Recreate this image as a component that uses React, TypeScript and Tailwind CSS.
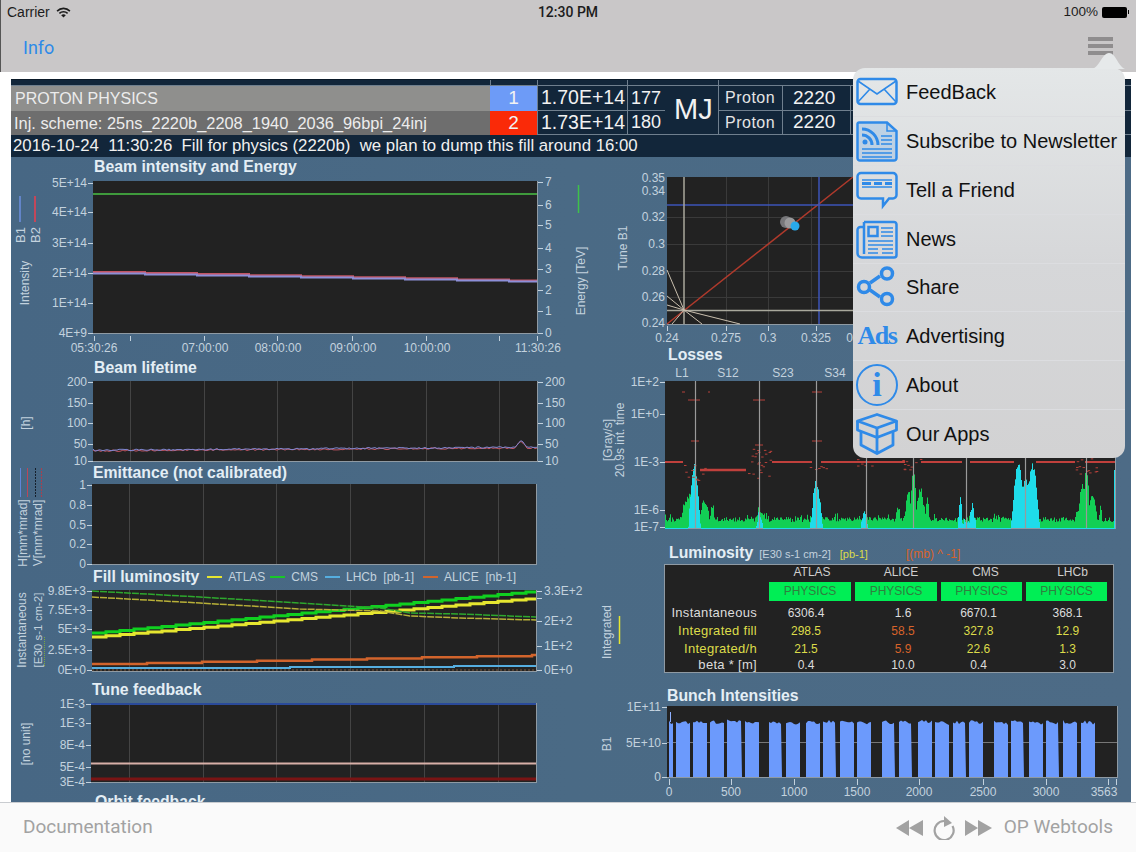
import type { ReactNode } from "react";

const rnd = (i: number) => {
  const v = Math.sin(i * 12.9898) * 43758.5453;
  return v - Math.floor(v);
};

type Tick = [string, number];

const TXT = "#c3d2de";
const PLOT = "#222222";
const AXIS = "#8f9aa3";

function Plot({ x0, x1, y0, y1, left = [], right = [], grid = [], dash = true }: { x0: number; x1: number; y0: number; y1: number; left?: Tick[]; right?: Tick[]; grid?: number[]; dash?: boolean }) {
  return (
    <g>
      <rect x={x0} y={y0} width={x1 - x0} height={y1 - y0} fill={PLOT} />
      <path d={`M${x0} ${y1 + 0.5}H${x1}M${x1 + 0.5} ${y0}V${y1 + 1}`} stroke={AXIS} strokeWidth="1" />
      {grid.map((x) => (
        <path key={x} d={`M${x + 0.5} ${y0}V${y1}`} stroke="#444" strokeWidth="1" />
      ))}
      {left.map(([t, y], i) => (
        <g key={i}>
          <text x={x0 - (dash ? 6 : 2)} y={y + 4} textAnchor="end" fontSize="12" fill={TXT}>{t}</text>
          {dash && <path d={`M${x0 - 5} ${y + 0.5}H${x0}`} stroke={TXT} />}
        </g>
      ))}
      {right.map(([t, y], i) => (
        <g key={i}>
          <path d={`M${x1 + 1} ${y + 0.5}H${x1 + 6}`} stroke={TXT} />
          <text x={x1 + 8} y={y + 4} fontSize="12" fill={TXT}>{t}</text>
        </g>
      ))}
    </g>
  );
}

function VLabel({ x, y, children, size = 12 }: { x: number; y: number; children: ReactNode; size?: number }) {
  return (
    <text x={x} y={y} fontSize={size} fill={TXT} textAnchor="middle" transform={`rotate(-90 ${x} ${y})`}>
      {children}
    </text>
  );
}

function Title({ children, className = "" }: { children: ReactNode; className?: string }) {
  return <div className={`h-5 text-[15.8px] leading-5 font-bold whitespace-nowrap text-[#e4eef5] ${className}`}>{children}</div>;
}

const timeGrid = [130, 204, 277, 352, 426, 499];

function stepLine(x0: number, x1: number, y0: number, y1: number, step: number) {
  let d = `M${x0} ${y0}`;
  for (let x = x0 + step; x <= x1; x += step) {
    const y = y0 + ((y1 - y0) * (x - x0)) / (x1 - x0);
    d += `H${x}V${y.toFixed(1)}`;
  }
  return `${d}H${x1}`;
}

function BeamIntensity() {
  return (
    <svg viewBox="11 177 590 181" className="block w-[590px] h-[181px] overflow-visible">
      <Plot x0={93} x1={537} y0={181} y1={333}
        left={[["5E+14", 183], ["4E+14", 212], ["3E+14", 243], ["2E+14", 273], ["1E+14", 303], ["4E+9", 333]]}
        right={[["7", 182], ["6", 205], ["5", 225], ["4", 248], ["3", 269], ["2", 290], ["1", 311], ["0", 333]]} />
      <path d="M93 194H537" stroke="#3f9a3c" strokeWidth="2" />
      <path d={stepLine(93, 537, 272, 281, 52)} stroke="#c25563" strokeWidth="2" fill="none" />
      <path d={stepLine(93, 537, 273.5, 282, 52)} stroke="#8d8fd8" strokeWidth="2" fill="none" />
      {[94, 130, 204, 277, 352, 426, 499, 537].map((x) => (
        <path key={x} d={`M${x + 0.5} 336V341`} stroke={TXT} />
      ))}
      {([["05:30:26", 94], ["07:00:00", 205], ["08:00:00", 278], ["09:00:00", 353], ["10:00:00", 427], ["11:30:26", 538]] as Tick[]).map(([t, x]) => (
        <text key={t} x={x} y={352} textAnchor="middle" fontSize="12" fill={TXT}>{t}</text>
      ))}
      <path d="M20 196V222" stroke="#6d8fe0" strokeWidth="1.5" />
      <path d="M35 196V222" stroke="#c2475a" strokeWidth="2" />
      <VLabel x={25} y={235} size={13}>B1</VLabel>
      <VLabel x={40} y={235} size={13}>B2</VLabel>
      <VLabel x={29} y={283}>Intensity</VLabel>
      <VLabel x={585} y={281}>Energy [TeV]</VLabel>
      <path d="M578.5 185V213" stroke="#3fc24a" strokeWidth="1.5" />
    </svg>
  );
}

function BeamLifetime() {
  let a = "M93 450";
  let b = "M93 449";
  for (let x = 95; x <= 537; x += 2) {
    const bump = Math.abs(x - 521) < 6 ? -7 * (1 - Math.abs(x - 521) / 6) : 0;
    const base = 450 - ((x - 93) / 444) * 3 + bump;
    a += `L${x} ${(base + rnd(x) * 1.6).toFixed(1)}`;
    b += `L${x} ${(base - 0.6 + rnd(x + 500) * 1.6).toFixed(1)}`;
  }
  return (
    <svg viewBox="11 378 590 85" className="block w-[590px] h-[85px] overflow-visible">
      <Plot x0={93} x1={537} y0={381} y1={461} grid={timeGrid}
        left={[["200", 382], ["150", 403], ["100", 423], ["50", 444], ["10", 461]]}
        right={[["200", 382], ["150", 403], ["100", 423], ["50", 444], ["10", 461]]} />
      <path d={a} stroke="#c25563" fill="none" />
      <path d={b} stroke="#7f86d0" fill="none" />
      <VLabel x={30} y={423}>[h]</VLabel>
    </svg>
  );
}

function Emittance() {
  return (
    <svg viewBox="11 483 590 84" className="block w-[590px] h-[84px] overflow-visible">
      <Plot x0={92} x1={536} y0={484} y1={564} grid={[129, 203, 276, 350, 424, 498]}
        left={[["1", 485], ["0.8", 505], ["0.5", 525], ["0.2", 544], ["0", 564]]} />
      <path d="M20.5 468V497" stroke="#5f86d8" />
      <path d="M27.5 468V497" stroke="#b8485a" />
      <path d="M35.5 468V497" stroke="#16202c" strokeDasharray="2 1" />
      <path d="M41.5 468V497" stroke="#a8404f" strokeDasharray="2 1" />
      <VLabel x={27} y={533}>H[mm*mrad]</VLabel>
      <VLabel x={42} y={533}>V[mm*mrad]</VLabel>
    </svg>
  );
}

function FillLuminosity() {
  return (
    <svg viewBox="11 587 590 93" className="block w-[590px] h-[93px] overflow-visible">
      <Plot x0={92} x1={536} y0={590} y1={671} grid={[129, 203, 276, 350, 424, 498]}
        left={[["9.8E+3", 591], ["7.5E+3", 610], ["5E+3", 629], ["2.5E+3", 650], ["0E+0", 670]]}
        right={[["3.3E+2", 591], ["", 598], ["2E+2", 621], ["1E+2", 646], ["0E+0", 670]]} />
      <path d={stepLine(92, 536, 633, 591, 14)} stroke="#10d020" strokeWidth="3" fill="none" />
      <path d={stepLine(92, 536, 637, 598, 14)} stroke="#e6e630" strokeWidth="3" fill="none" />
      <path d="M92 591L200 597L300 603L380 608L410 613L460 614L536 617" stroke="#2ea82e" strokeWidth="1.5" strokeDasharray="7 1" fill="none" />
      <path d="M92 597L200 603L300 609L380 611L410 616L460 618L536 620" stroke="#b8b038" strokeWidth="1.5" strokeDasharray="7 1" fill="none" />
      <path d={stepLine(92, 536, 664, 655, 55)} stroke="#d2642c" strokeWidth="2.5" fill="none" />
      <path d="M92 668H290V667H454V666H536" stroke="#55aee0" strokeWidth="2" fill="none" />
      <path d="M92 670H536" stroke="#7a5a40" strokeWidth="1" strokeDasharray="2 2" />
      <path d="M44.5 637V666" stroke="#7aa840" strokeDasharray="1 1" />
      <VLabel x={26} y={630}>Instantaneous</VLabel>
      <VLabel x={42} y={630} size={11.5}>[E30 s-1 cm-2]</VLabel>
      <VLabel x={611} y={632}>Integrated</VLabel>
      <path d="M619.5 616V644" stroke="#e6e630" strokeWidth="1.5" />
    </svg>
  );
}

function TuneFeedback() {
  return (
    <svg viewBox="11 700 590 90" className="block w-[590px] h-[90px] overflow-visible">
      <Plot x0={91} x1={536} y0={703} y1={782} grid={[129, 203, 276, 350, 424, 498]}
        left={[["1E-3", 704], ["1E-3", 723], ["8E-4", 745], ["5E-4", 767], ["3E-4", 782]]} />
      <path d="M91 704H536" stroke="#2a4a9a" strokeWidth="2" />
      <path d="M91 763.5H536" stroke="#d8b0a8" strokeWidth="2" />
      <path d="M91 779H536" stroke="#7a1414" strokeWidth="3" />
      <VLabel x={30} y={744}>[no unit]</VLabel>
    </svg>
  );
}

function TuneDiagram() {
  return (
    <svg viewBox="601 172 300 173" className="block w-[300px] h-[173px] overflow-visible">
      <Plot x0={667} x1={900} y0={177} y1={324} dash={false}
        left={[["0.35", 178], ["0.34", 191], ["0.32", 217], ["0.3", 244], ["0.28", 271], ["0.26", 297], ["0.24", 323]]} />
      <path d="M726.5 177V324M768.5 177V324M811.5 177V324M667 217.5H900M667 244.5H900M667 271.5H900M667 297.5H900" stroke="#3a3a3a" />
      <path d="M667 324L853 177" stroke="#b03a2c" strokeWidth="1.5" />
      <path d="M819 177V324M667 205H900" stroke="#3c54b8" strokeWidth="1.5" />
      <path d="M684 177V324M667 310.5H900" stroke="#a9a89c" strokeWidth="1.5" />
      <path d="M684 310L667 270M684 310L667 296M684 310L667 305M684 310L740 324M684 310L702 324M684 310L672 324" stroke="#c9bfae" />
      <circle cx="786" cy="222" r="6" fill="#77777a" />
      <circle cx="790" cy="223" r="5.5" fill="#9a9a9c" />
      <circle cx="795" cy="226" r="4.5" fill="#2aa8ea" />
      {([["0.24", 667], ["0.275", 726], ["0.3", 768], ["0.325", 816], ["0.35", 858]] as Tick[]).map(([t, x]) => (
        <g key={t}>
          <path d={`M${x + 0.5} 326V331`} stroke={TXT} />
          <text x={x} y={342} textAnchor="middle" fontSize="12" fill={TXT}>{t}</text>
        </g>
      ))}
      <VLabel x={627} y={248}>Tune B1</VLabel>
    </svg>
  );
}

const peaks = [
  { x: 694, w: 5, top: 462, cyan: true },
  { x: 690, w: 10, top: 490 },
  { x: 704, w: 5, top: 496 },
  { x: 712, w: 3, top: 502 },
  { x: 759, w: 5, top: 506 },
  { x: 759, w: 3, top: 510, cyan: true },
  { x: 816, w: 5, top: 478, cyan: true },
  { x: 864, w: 3, top: 506, cyan: true },
  { x: 913, w: 3, top: 465 },
  { x: 908, w: 4, top: 488 },
  { x: 920, w: 5, top: 486 },
  { x: 927, w: 2, top: 494 },
  { x: 898, w: 3, top: 504 },
  { x: 960, w: 2, top: 495, cyan: true },
  { x: 966, w: 4, top: 515, cyan: true },
  { x: 972, w: 3, top: 502, cyan: true },
  { x: 1018, w: 6, top: 461, cyan: true },
  { x: 1032, w: 6, top: 461, cyan: true },
  { x: 1025, w: 11, top: 478, cyan: true },
  { x: 1086, w: 3, top: 462 },
  { x: 1082, w: 5, top: 484 },
  { x: 1092, w: 5, top: 490 },
  { x: 1077, w: 2, top: 505 },
  { x: 1100, w: 2, top: 504 },
];

function lossCol(x: number, cyan: boolean) {
  let top = cyan ? 529 : 517 + rnd(x) * 5 - (rnd(x * 7) > 0.9 ? 4 : 0);
  for (const p of peaks) {
    if (cyan && !p.cyan) continue;
    const d = Math.abs(x - p.x) / p.w;
    if (d < 1.3) {
      const y = p.top + (528 - p.top) * Math.pow(d / 1.3, 1.6) + rnd(x * 3) * 7;
      top = Math.min(top, y);
    }
  }
  return top;
}

// x, y, spread, count of the red loss dots
const clusters = [
  [695, 462, 18, 12],
  [759, 446, 34, 24],
  [816, 466, 6, 6],
  [913, 458, 12, 10],
  [866, 459, 8, 5],
  [1086, 458, 18, 14],
];

function Losses() {
  let green = "M665 528";
  let cyan = "M665 528";
  for (let x = 665; x <= 1115; x++) {
    green += `H${x}V${lossCol(x, false).toFixed(1)}`;
    cyan += `H${x}V${lossCol(x, true).toFixed(1)}`;
  }
  green += "L1115 528Z";
  cyan += "L1115 528Z";
  return (
    <svg viewBox="601 365 535 170" className="block w-[535px] h-[170px] overflow-visible">
      {([["L1", 682], ["S12", 728], ["S23", 783], ["S34", 835]] as Tick[]).map(([t, x]) => (
        <text key={t} x={x} y={377} textAnchor="middle" fontSize="12" fill={TXT}>{t}</text>
      ))}
      <Plot x0={665} x1={1115} y0={381} y1={528}
        left={[["1E+2", 382], ["1E+0", 414], ["1E-3", 462], ["1E-6", 510], ["1E-7", 527]]} />
      <path d={green} fill="#12cf55" />
      <path d={cyan} fill="#1fdcea" />
      <path d="M665 462H683M772 462H812M821 462H905M921 462H962M970 462H1014M1036 462H1075M1085 462H1115" stroke="#c0403c" strokeWidth="2" />
      <path d="M700 470H746" stroke="#c0403c" strokeWidth="2.5" />
      {clusters.map(([cx, cy, h, n], c) =>
        Array.from({ length: n }, (_, i) => (
          <rect key={`${c}-${i}`} x={cx - 11 + rnd(c * 20 + i) * 22} y={cy + rnd(c * 31 + i + 7) * h} width="2.5" height="1" fill="#b5403a" />
        ))
      )}
      <path d="M682 392H685M708 392H710M688 400H700M753 400H765M812 392H822M691 441H699M755 445H763M812 441H822" stroke="#b5403a" />
      {[695, 759, 816, 866, 913, 966, 1025, 1086].map((x) => (
        <path key={x} d={`M${x + 0.5} 381V528`} stroke="#9a9a9a" strokeWidth="1.2" />
      ))}
      <path d="M1114.5 470V528" stroke="#1fdcea" />
      <VLabel x={612} y={440}>[Gray/s]</VLabel>
      <VLabel x={624} y={440}>20.9s int. time</VLabel>
    </svg>
  );
}

const groups = [[669, 673], [676, 690], [693, 707], [710, 724], [727, 742], [745, 759], [769, 782], [786, 800], [806, 820], [823, 836], [840, 854], [857, 871], [882, 895], [899, 912], [918, 932], [935, 949], [953, 966], [969, 983], [994, 1008], [1011, 1024], [1029, 1043], [1046, 1059], [1063, 1077], [1081, 1095]];

function BunchIntensities() {
  return (
    <svg viewBox="601 706 535 94" className="block w-[535px] h-[94px] overflow-visible">
      <Plot x0={667} x1={1117} y0={706} y1={777} left={[["1E+11", 707], ["5E+10", 743], ["0", 777]]} />
      <path d="M667 742.5H1117" stroke="#777" />
      {groups.map(([a, b], g) => {
        let d = `M${a} 777`;
        for (let x = a; x <= b; x += 2) {
          d += `L${x} ${(720 + rnd(g * 40 + x) * 3.5 + ((x - a) / (b - a)) * 1.5 - (g % 5 === 4 ? 1 : 0)).toFixed(1)}`;
        }
        return <path key={g} d={`${d}L${b} 777Z`} fill="#6c9afc" />;
      })}
      <path d="M670.5 712V722" stroke="#8fb0ff" />
      {([["0", 669], ["500", 731], ["1000", 794], ["1500", 857], ["2000", 919], ["2500", 983], ["3000", 1046], ["3563", 1104]] as Tick[]).map(([t, x]) => (
        <text key={t} x={x} y={796} textAnchor="middle" fontSize="12" fill={TXT}>{t}</text>
      ))}
      {[669, 731, 794, 857, 919, 983, 1046, 1108, 1116].map((x) => (
        <path key={x} d={`M${x + 0.5} 779V785`} stroke={TXT} />
      ))}
      <VLabel x={611} y={744}>B1</VLabel>
    </svg>
  );
}

const lumiHeads = [
  { t: "ATLAS", c: "" },
  { t: "ALICE", c: "pl-[6px]" },
  { t: "CMS", c: "pl-[4px]" },
  { t: "LHCb", c: "pl-[8px]" },
];
const lumiPads = ["pr-[12px]", "pl-[10px]", "pr-[10px]", "pr-[2px]"];

const lumiRows = [
  { label: "Instantaneous", color: "text-[#dcdcdc]", alt: "text-[#dcdcdc]", vals: ["6306.4", "1.6", "6670.1", "368.1"] },
  { label: "Integrated fill", color: "text-[#dcdc4a]", alt: "text-[#d8632a]", vals: ["298.5", "58.5", "327.8", "12.9"] },
  { label: "Integrated/h", color: "text-[#dcdc4a]", alt: "text-[#d8632a]", vals: ["21.5", "5.9", "22.6", "1.3"] },
  { label: "beta * [m]", color: "text-[#dcdcdc]", alt: "text-[#dcdcdc]", vals: ["0.4", "10.0", "0.4", "3.0"] },
];

function LumiTable() {
  return (
    <div className="ml-[63px] w-[450px] h-[109px] bg-[#222222] border border-[#8f9aa3] text-[12px] grid grid-cols-[104px_86px_86px_85px_85px] grid-rows-[14px_25px_18px_18px_18px_13px] items-center">
      <div />
      {lumiHeads.map((h) => (
        <div key={h.t} className={`text-center text-[#cfcfcf] leading-3 ${h.c}`}>{h.t}</div>
      ))}
      <div />
      {["a", "b", "c", "d"].map((k) => (
        <div key={k} className="h-[19px] mr-[4px] bg-[#00ee55] text-[#2f7f3f] text-center leading-[19px]">PHYSICS</div>
      ))}
      {lumiRows.map((r) => (
        <div key={r.label} className="contents">
          <div className={`text-right text-[13px] tracking-[0.3px] pr-[12px] leading-3 whitespace-nowrap ${r.color}`}>{r.label}</div>
          {r.vals.map((v, i) => (
            <div key={i} className={`text-center leading-3 ${lumiPads[i]} ${i === 1 ? r.alt : r.color}`}>{v}</div>
          ))}
        </div>
      ))}
    </div>
  );
}

const BLUE = "#2f8ae8";

function MailIcon() {
  return (
    <svg viewBox="0 0 42 42" className="w-[42px] h-[42px]" fill="none" stroke={BLUE} strokeWidth="2.5">
      <rect x="1.5" y="8" width="39" height="25" rx="3" />
      <path d="M2 10L21 23L40 10M2 31L14 18M40 31L28 18" strokeWidth="1.6" />
    </svg>
  );
}

function RssIcon() {
  return (
    <svg viewBox="0 0 42 42" className="w-[42px] h-[42px]" fill="none" stroke={BLUE}>
      <path d="M3 2.5H31L40.5 11V38a2.5 2.5 0 0 1-2.5 2.5H4a2.5 2.5 0 0 1-2.5-2.5V4A1.5 1.5 0 0 1 3 2.5Z" fill={BLUE} fillOpacity="0.18" strokeWidth="2.5" />
      <path d="M31 3V11H40" strokeWidth="1.5" />
      <circle cx="9" cy="22" r="2.5" fill={BLUE} stroke="none" />
      <path d="M6 15A10 10 0 0 1 16 25M6 9A16 16 0 0 1 22 25" strokeWidth="3" />
      <path d="M25 16H36M25 20H36M25 24H36M6 29H36M6 33H36M6 37H36" strokeWidth="1.5" />
    </svg>
  );
}

function BubbleIcon() {
  return (
    <svg viewBox="0 0 42 42" className="w-[42px] h-[42px]" fill="none" stroke={BLUE}>
      <path d="M5 4H37a3.5 3.5 0 0 1 3.5 3.5V26a3.5 3.5 0 0 1-3.5 3.5H33L27 37V29.5H5A3.5 3.5 0 0 1 1.5 26V7.5A3.5 3.5 0 0 1 5 4Z" strokeWidth="2.5" />
      <path d="M6 11H36M6 18H36" strokeWidth="1.4" />
      <path d="M6 14.5H15M18 14.5H26M29 14.5H36" strokeWidth="3" />
    </svg>
  );
}

function NewsIcon() {
  return (
    <svg viewBox="0 0 42 42" className="w-[42px] h-[42px]" fill="none" stroke={BLUE}>
      <path d="M8 4H38a2.5 2.5 0 0 1 2.5 2.5V37a2.5 2.5 0 0 1-2.5 2.5H6A4.5 4.5 0 0 1 1.5 35V12a3 3 0 0 1 3-3H8" strokeWidth="2.5" />
      <path d="M8 4V36" strokeWidth="2.5" />
      <rect x="12.5" y="9" width="9" height="9" strokeWidth="2.5" />
      <path d="M25 10H37M25 14H37M25 18H37M12 23H37M12 27H37M12 31H22M26 31H37M12 35H22M26 35H37" strokeWidth="1.5" />
    </svg>
  );
}

function ShareIcon() {
  return (
    <svg viewBox="0 0 42 42" className="w-[42px] h-[42px]" fill="none" stroke={BLUE} strokeWidth="3.5">
      <path d="M14 17L24 10M14 24L24 31" />
      <circle cx="8" cy="21" r="5.5" />
      <circle cx="31" cy="7.5" r="5.5" />
      <circle cx="31" cy="33" r="5.5" />
    </svg>
  );
}

function InfoIcon() {
  return (
    <div className="w-[42px] h-[42px] rounded-full border-2 border-[#2f8ae8] flex items-center justify-center font-['Liberation_Serif',serif] font-bold text-[34px] leading-none text-[#2f8ae8]">i</div>
  );
}

function BoxIcon() {
  return (
    <svg viewBox="0 0 42 42" className="w-[42px] h-[42px]" fill="none" stroke={BLUE} strokeWidth="2.8" strokeLinejoin="round">
      <path d="M21 1.5L40.5 8L21 15L1.5 8Z" />
      <path d="M1.5 8V17L21 24.5L40.5 17V8M21 15V24.5" />
      <path d="M5 18.5V32L21 40.5L37 32V18.5M21 24.5V40.5" />
    </svg>
  );
}

const menu: { label: string; icon: ReactNode }[] = [
  { label: "FeedBack", icon: <MailIcon /> },
  { label: "Subscribe to Newsletter", icon: <RssIcon /> },
  { label: "Tell a Friend", icon: <BubbleIcon /> },
  { label: "News", icon: <NewsIcon /> },
  { label: "Share", icon: <ShareIcon /> },
  {
    label: "Advertising",
    icon: <span className="font-['Liberation_Serif',serif] font-bold text-[26px] tracking-[-1.5px] leading-none text-[#2f8ae8]">Ads</span>,
  },
  { label: "About", icon: <InfoIcon /> },
  { label: "Our Apps", icon: <BoxIcon /> },
];

function Popover() {
  return (
    <div className="absolute left-[853px] top-[53px] w-[272px]">
      <svg viewBox="0 0 34 16" className="absolute left-[238px] top-0 w-[34px] h-[16px]">
        <path d="M0 16C8 16 11 0 18 0C25 0 26 12 34 16Z" fill="#e6e9ea" />
      </svg>
      <div className="mt-[15px] h-[390px] rounded-[12px] bg-gradient-to-b from-[#e4e7e8] via-[#d6d7d9] to-[#d2d2d3] flex flex-col overflow-hidden">
        {menu.map((m, i) => (
          <div key={m.label} className={`flex-1 flex items-center pl-[3px] ${i > 0 ? "border-t border-[#dcdde0]" : ""}`}>
            <div className="w-[42px] h-[42px] flex items-center justify-center shrink-0">{m.icon}</div>
            <span className="ml-[8px] text-[20px] text-[#111111] whitespace-nowrap">{m.label}</span>
          </div>
        ))}
      </div>
    </div>
  );
}

function Header() {
  const cell = "border-l border-b border-[#6f7f8e] flex items-center";
  return (
    <div className="bg-[#12263a]">
      <div className="h-[6px] border-b border-[#6f7f8e] flex">
        <div className="w-[479px]" />
        <div className="w-[47px] border-l border-[#6f7f8e]" />
        <div className="w-[90px] border-l border-[#6f7f8e]" />
        <div className="w-[91px] border-l border-[#6f7f8e]" />
        <div className="w-[64px] border-l border-[#6f7f8e]" />
      </div>
      <div className="grid grid-cols-[479px_47px_90px_38px_53px_64px_68px_1fr] grid-rows-[25px_24px]">
        <div className="bg-[#8f8f8d] text-[#ececec] text-[16px] font-medium pl-[4px] flex items-center whitespace-nowrap">PROTON PHYSICS</div>
        <div className="bg-[#6d9bf7] text-[#f2f2f2] text-[19px] flex items-center justify-center">1</div>
        <div className={`${cell} text-[#f2f2f2] text-[19.5px] pl-[3px] whitespace-nowrap`}>1.70E+14</div>
        <div className={`${cell} text-[#f2f2f2] text-[18px] pl-[3px]`}>177</div>
        <div className="row-span-2 border-b border-[#6f7f8e] flex items-center pl-[9px] text-[#f2f2f2] text-[29px]">MJ</div>
        <div className={`${cell} text-[#e4e4e4] text-[16px] tracking-[0.5px] pl-[6px]`}>Proton</div>
        <div className={`${cell} text-[#f2f2f2] text-[19px] pl-[10px]`}>2220</div>
        <div className={cell} />
        <div className="bg-[#6e6e6e] text-[#ececec] text-[16.4px] pl-[3px] flex items-center whitespace-nowrap">Inj. scheme: 25ns_2220b_2208_1940_2036_96bpi_24inj</div>
        <div className="bg-[#fa2a08] text-[#f2f2f2] text-[19px] flex items-center justify-center">2</div>
        <div className={`${cell} text-[#f2f2f2] text-[19.5px] pl-[3px] whitespace-nowrap`}>1.73E+14</div>
        <div className={`${cell} text-[#f2f2f2] text-[18px] pl-[3px]`}>180</div>
        <div className={`${cell} text-[#e4e4e4] text-[16px] tracking-[0.5px] pl-[6px]`}>Proton</div>
        <div className={`${cell} text-[#f2f2f2] text-[19px] pl-[10px]`}>2220</div>
        <div className={cell} />
      </div>
      <div className="h-[22px] pl-[2px] flex items-center text-[#f0f0f0] text-[16.8px] whitespace-pre">2016-10-24  11:30:26  Fill for physics (2220b)  we plan to dump this fill around 16:00</div>
    </div>
  );
}

function Legend() {
  const items = [
    { c: "bg-[#e6e630]", t: "ATLAS", w: "ml-[8px]" },
    { c: "bg-[#18c828]", t: "CMS", w: "ml-[5px]" },
    { c: "bg-[#55aee0]", t: "LHCb  [pb-1]", w: "ml-[7px]" },
    { c: "bg-[#d2642c]", t: "ALICE  [nb-1]", w: "ml-[9px]" },
  ];
  return (
    <div className="flex items-center pl-[82px]">
      <span className="text-[15.8px] leading-5 font-bold text-[#e4eef5] whitespace-nowrap">Fill luminosity</span>
      {items.map((it) => (
        <span key={it.t} className={`flex items-center ${it.w} text-[12px] text-[#c3d2de] whitespace-pre`}>
          <span className={`w-[15px] h-[2px] mr-[6px] ${it.c}`} />
          {it.t}
        </span>
      ))}
    </div>
  );
}

function Dashboard() {
  return (
    <div className="font-['Liberation_Sans',sans-serif] border-t border-[#0b1a28]">
      <Header />
      <div className="flex h-[650px] bg-gradient-to-r from-[#476784] via-[#4a6a85] to-[#4d6b86]">
        <div className="w-[590px] shrink-0">
          <Title className="pl-[83px]">Beam intensity and Energy</Title>
          <BeamIntensity />
          <Title className="pl-[83px]">Beam lifetime</Title>
          <BeamLifetime />
          <Title className="pl-[82px]">Emittance (not calibrated)</Title>
          <Emittance />
          <Legend />
          <FillLuminosity />
          <Title className="pl-[81px]">Tune feedback</Title>
          <TuneFeedback />
          <Title className="pl-[84px] mt-[2px]">Orbit feedback</Title>
        </div>
        <div className="flex-1 min-w-0 pt-[15px]">
          <TuneDiagram />
          <Title className="pl-[67px]">Losses</Title>
          <Losses />
          <div className="h-[29px] pt-[8px] pl-[68px] flex items-baseline text-[11px] whitespace-nowrap">
            <span className="text-[15.8px] leading-5 font-bold text-[#e4eef5] mr-[6px]">Luminosity</span>
            <span className="text-[#c3d2de]">[E30 s-1 cm-2]</span>
            <span className="ml-[9px] text-[#dcdc4a]">[pb-1]</span>
            <span className="ml-[38px] text-[12px] text-[#d8632a]">[(mb) ^ -1]</span>
          </div>
          <LumiTable />
          <Title className="pl-[66px] mt-[13px]">Bunch Intensities</Title>
          <BunchIntensities />
        </div>
      </div>
    </div>
  );
}

export default function App() {
  return (
    <div className="relative w-[1136px] h-[852px] overflow-hidden bg-white font-['Liberation_Sans',sans-serif] flex flex-col">
      <div className="h-[72px] shrink-0 bg-[#c9c7c8] border-l border-[#555555]">
        <div className="h-6 pl-[6px] pr-[7px] flex items-center justify-between text-[#1c1c1c]">
          <div className="flex items-center gap-[6px] w-[200px] text-[14px]">
            <span>Carrier</span>
            <svg viewBox="0 0 16 12" className="w-[15px] h-[11px]" fill="none" stroke="#1c1c1c" strokeWidth="1.7">
              <path d="M1 4.5C5 .5 11 .5 15 4.5M3.5 7C6 4.5 10 4.5 12.5 7" />
              <path d="M8 11.5L5.5 9C7 7.7 9 7.7 10.5 9Z" fill="#1c1c1c" stroke="none" />
            </svg>
          </div>
          <span className="font-['Roboto',sans-serif] font-medium text-[14px]">12:30 PM</span>
          <div className="flex items-center justify-end gap-[4px] w-[200px] text-[13.5px]">
            <span>100%</span>
            <div className="w-[25px] h-[11px] rounded-[2px] bg-black" />
            <div className="w-[1px] h-[4px] -ml-[3px] bg-black" />
          </div>
        </div>
        <div className="h-12 pl-[22px] pr-[23px] flex items-center justify-between pb-[2px]">
          <span className="text-[18px] text-[#2d8ae8] font-['Roboto',sans-serif]">Info</span>
          <div className="w-[25px] flex flex-col gap-[3px] mb-[2px]">
            <div className="h-[4px] bg-[#8f8d8e]" />
            <div className="h-[4px] bg-[#8f8d8e]" />
            <div className="h-[4px] bg-[#8f8d8e]" />
          </div>
        </div>
      </div>
      <div className="h-[730px] shrink-0 overflow-hidden pt-[7px] pl-[11px] pr-[5px]">
        <Dashboard />
      </div>
      <div className="h-[50px] shrink-0 bg-[#fafafa] border-t border-[#c9ccd0] pl-[23px] pr-[23px] flex items-center justify-between font-['Roboto',sans-serif] text-[19px] text-[#a2a2a2]">
        <span>Documentation</span>
        <div className="flex items-center">
          <svg viewBox="0 0 96 24" className="w-[96px] h-[24px] mr-[12px]">
            <path d="M0 12L13 4V20ZM13 12L27 4V20Z" fill="#a2a2a2" />
            <path d="M48 5A9.5 9.500 0 1 0 56.500 10" fill="none" stroke="#a2a2a2" strokeWidth="2.2" />
            <path d="M48 0L56 7L48 11Z" fill="#a2a2a2" />
            <path d="M69 4L82 12L69 20ZM82 4L96 12L82 20Z" fill="#a2a2a2" />
          </svg>
          <span>OP Webtools</span>
        </div>
      </div>
      <Popover />
    </div>
  );
}
